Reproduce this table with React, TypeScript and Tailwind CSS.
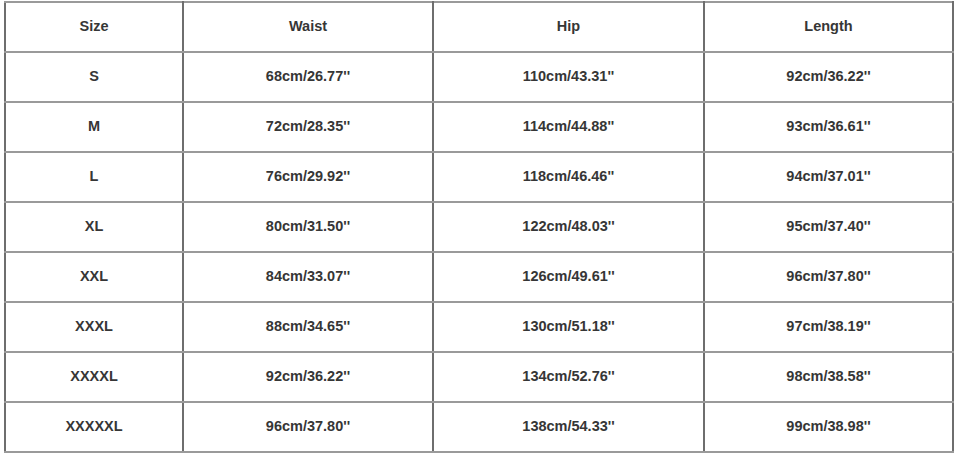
const rows = [
  ["S", "68cm/26.77''", "110cm/43.31''", "92cm/36.22''"],
  ["M", "72cm/28.35''", "114cm/44.88''", "93cm/36.61''"],
  ["L", "76cm/29.92''", "118cm/46.46''", "94cm/37.01''"],
  ["XL", "80cm/31.50''", "122cm/48.03''", "95cm/37.40''"],
  ["XXL", "84cm/33.07''", "126cm/49.61''", "96cm/37.80''"],
  ["XXXL", "88cm/34.65''", "130cm/51.18''", "97cm/38.19''"],
  ["XXXXL", "92cm/36.22''", "134cm/52.76''", "98cm/38.58''"],
  ["XXXXXL", "96cm/37.80''", "138cm/54.33''", "99cm/38.98''"],
];

const cell = "border-x-2 border-x-[#6e6e6e] border-y-2 border-y-[#9a9a9a] h-[50px] p-0 text-center align-middle";

export default function App() {
  return (
    <div className="w-[956px] h-[456px] bg-white pt-[1px] pl-[4px]">
      <table
        className="border-collapse w-[948px] table-fixed text-[14.5px] font-bold text-[#363636]"
        style={{ fontFamily: '"Liberation Sans", Arial, sans-serif' }}
      >
        <colgroup>
          <col className="w-[178px]" />
          <col className="w-[250px]" />
          <col className="w-[271px]" />
          <col className="w-[249px]" />
        </colgroup>
        <thead>
          <tr>
            <th className={cell}>Size</th>
            <th className={cell}>Waist</th>
            <th className={cell}>Hip</th>
            <th className={cell}>Length</th>
          </tr>
        </thead>
        <tbody>
          {rows.map((r) => (
            <tr key={r[0]}>
              {r.map((v, i) => (
                <td key={i} className={cell}>
                  {v}
                </td>
              ))}
            </tr>
          ))}
        </tbody>
      </table>
    </div>
  );
}
